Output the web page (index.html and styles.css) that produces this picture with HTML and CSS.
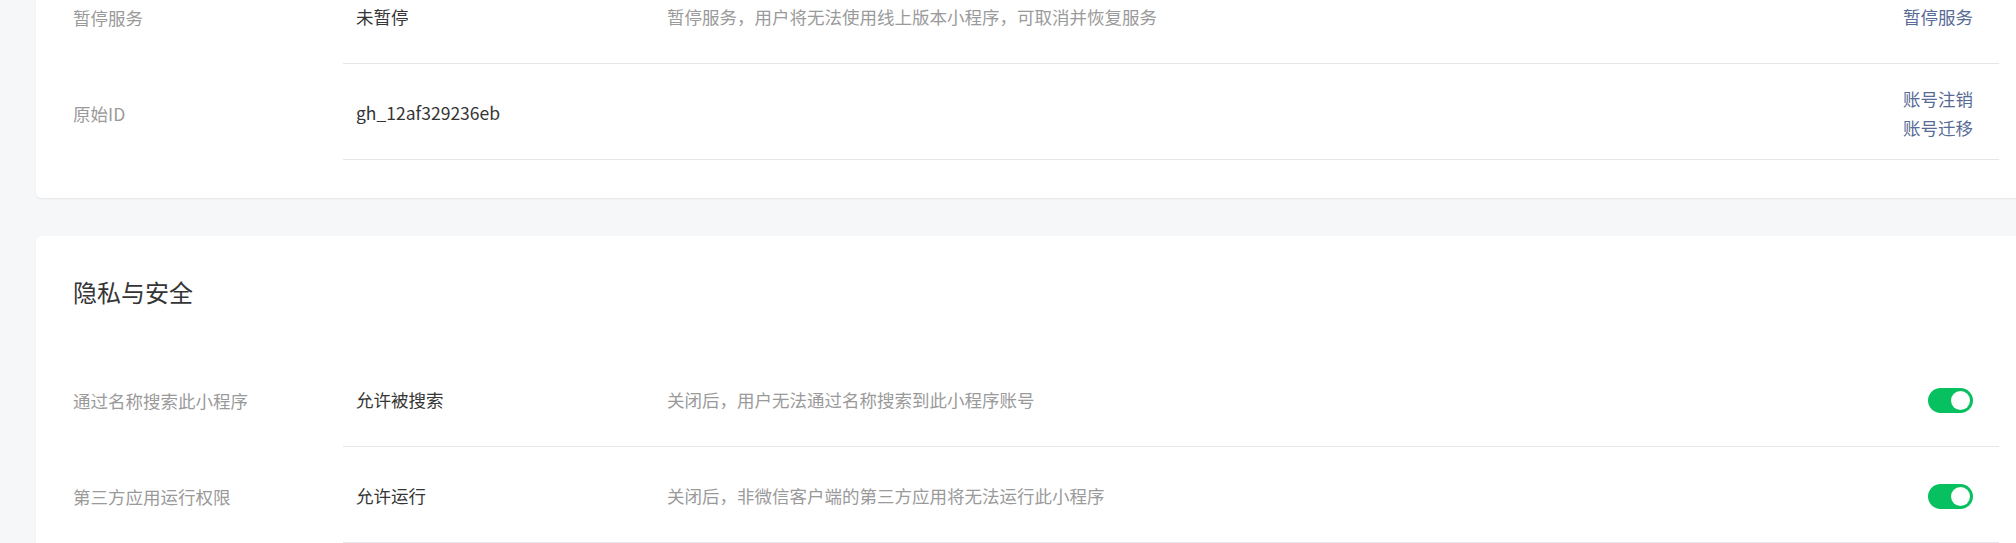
FILE: index.html
```html
<!DOCTYPE html>
<html lang="zh-CN">
<head>
<meta charset="utf-8">
<title>设置</title>
<link rel="stylesheet" href="styles.css">
</head>
<body>
<div class="page">
  <section class="card card-basic">
    <div class="row">
      <div class="row-label">暂停服务</div>
      <div class="row-body">
        <div class="row-value">未暂停</div>
        <div class="row-desc">暂停服务，用户将无法使用线上版本小程序，可取消并恢复服务</div>
        <div class="row-action"><a class="link">暂停服务</a></div>
      </div>
    </div>
    <div class="row">
      <div class="row-label">原始ID</div>
      <div class="row-body">
        <div class="row-value">gh_12af329236eb</div>
        <div class="row-desc"></div>
        <div class="row-action links">
          <a class="link">账号注销</a>
          <a class="link">账号迁移</a>
        </div>
      </div>
    </div>
  </section>

  <section class="card card-privacy">
    <h2 class="card-title">隐私与安全</h2>
    <div class="row">
      <div class="row-label">通过名称搜索此小程序</div>
      <div class="row-body">
        <div class="row-value">允许被搜索</div>
        <div class="row-desc">关闭后，用户无法通过名称搜索到此小程序账号</div>
        <div class="row-action"><span class="switch is-on"><span class="knob"></span></span></div>
      </div>
    </div>
    <div class="row">
      <div class="row-label">第三方应用运行权限</div>
      <div class="row-body">
        <div class="row-value">允许运行</div>
        <div class="row-desc">关闭后，非微信客户端的第三方应用将无法运行此小程序</div>
        <div class="row-action"><span class="switch is-on"><span class="knob"></span></span></div>
      </div>
    </div>
  </section>
</div>
</body>
</html>
```

FILE: styles.css
```css
* {
  box-sizing: border-box;
}

html, body {
  margin: 0;
  padding: 0;
  background: #f6f7f9;
  overflow: hidden;
}

body {
  font-family: "Noto Sans CJK SC", "Noto Sans", sans-serif;
  font-size: 17.5px;
  color: #353535;
}

.page {
  margin-top: -32px;
  margin-left: 36px;
  width: 2010px;
  display: flex;
  flex-direction: column;
  gap: 38px;
}

.card {
  background: #fff;
  border-radius: 5px;
  box-shadow: 0 1px 2px rgba(0, 0, 0, 0.07);
  padding: 0 37px;
}

.card-basic {
  padding-bottom: 38px;
  border-top-left-radius: 0;
  border-top-right-radius: 0;
}

.card-privacy {
  padding-bottom: 20px;
}

.card-title {
  margin: 0;
  padding-top: 40px;
  margin-bottom: 43px;
  font-size: 24px;
  line-height: 32px;
  font-weight: 400;
  color: #353535;
}

.row {
  display: flex;
  height: 96px;
}

.row-label {
  width: 270px;
  flex: none;
  display: flex;
  align-items: center;
  padding-top: 3px;
  color: #9a9a9a;
  line-height: 28px;
}

.row-body {
  width: 1656px;
  flex: none;
  display: flex;
  align-items: center;
  padding: 3px 26px 0 13px;
  border-bottom: 1px solid #e7e7eb;
  line-height: 28px;
}

.row-value {
  width: 311px;
  flex: none;
  color: #353535;
}

.row-desc {
  flex: 1;
  color: #9a9a9a;
}

.row-action {
  flex: none;
  display: flex;
  flex-direction: column;
  align-items: flex-end;
}

.links .link {
  line-height: 29px;
}

.link {
  color: #576b95;
  text-decoration: none;
  cursor: pointer;
}

.switch {
  display: flex;
  align-items: center;
  justify-content: flex-end;
  width: 45px;
  height: 25px;
  border-radius: 13px;
  background: #07c160;
  padding: 0 3px;
}

.knob {
  width: 19px;
  height: 19px;
  border-radius: 50%;
  background: #fff;
}
```
